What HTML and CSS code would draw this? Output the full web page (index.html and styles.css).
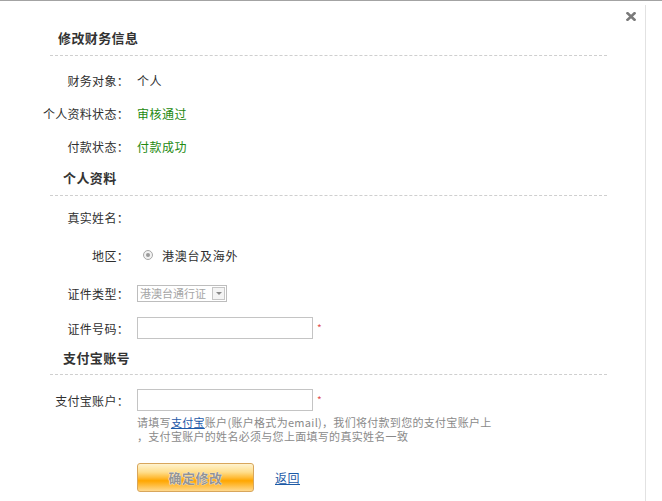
FILE: index.html
```html
<!DOCTYPE html>
<html lang="zh">
<head>
<meta charset="utf-8">
<title>修改财务信息</title>
<link rel="stylesheet" href="styles.css">
</head>
<body>
<div class="top-line"></div>
<div class="panel">
  <a class="close" href="#" aria-label="关闭">
    <svg width="10" height="9" viewBox="0 0 10 9"><path d="M1.5 1.2 L8.5 7.8 M8.5 1.2 L1.5 7.8" stroke="#7a7a7a" stroke-width="2.6" stroke-linecap="square"/></svg>
  </a>

  <div class="title">修改财务信息</div>
  <div class="dash dash-first"></div>

  <div class="row r33 first-row"><span class="label">财务对象：</span><span class="value">个人</span></div>
  <div class="row r33"><span class="label">个人资料状态：</span><span class="value green">审核通过</span></div>
  <div class="row r33"><span class="label">付款状态：</span><span class="value green">付款成功</span></div>

  <div class="heading h-personal">个人资料</div>
  <div class="dash dash-personal"></div>

  <div class="row r-name"><span class="label">真实姓名：</span><span class="value"></span></div>
  <div class="row r-region"><span class="label">地区：</span><span class="value"><span class="radio"><span class="radio-dot"></span></span><span class="radio-text">港澳台及海外</span></span></div>
  <div class="row r-type"><span class="label">证件类型：</span><span class="value"><span class="select"><span class="select-text">港澳台通行证</span><span class="select-btn"><span class="arrow"></span></span></span></span></div>
  <div class="row r-idnum"><span class="label">证件号码：</span><span class="value"><span class="input"></span><span class="star">*</span></span></div>

  <div class="heading h-alipay">支付宝账号</div>
  <div class="dash dash-alipay"></div>

  <div class="row r-account"><span class="label">支付宝账户：</span><span class="value"><span class="input"></span><span class="star">*</span></span></div>
  <div class="help">
    <div class="help-line">请填写<a href="#" class="help-link">支付宝</a>账户(账户格式为email)，我们将付款到您的支付宝账户上</div>
    <div class="help-line">，支付宝账户的姓名必须与您上面填写的真实姓名一致</div>
  </div>

  <div class="actions">
    <button class="submit" type="button">确定修改</button>
    <a class="back" href="#">返回</a>
  </div>
</div>
</body>
</html>
```
FILE: styles.css
```css
html, body {
  margin: 0;
  padding: 0;
  background: #fff;
}
body {
  font-family: "Noto Sans CJK SC", "Liberation Sans", sans-serif;
  font-size: 12px;
  color: #2f2f2f;
}
.top-line {
  height: 1px;
  background: #a3a3a3;
}
.panel {
  position: relative;
  width: 646px;
  min-height: 496px;
  margin-top: 4px;
  border-right: 1px solid #e2e2e2;
  box-sizing: border-box;
  padding-top: 23px;
}
.close {
  position: absolute;
  left: 626px;
  top: 7px;
  width: 10px;
  height: 9px;
  display: block;
}
.close svg { display: block; }

.title {
  margin-left: 58px;
  height: 20px;
  line-height: 20px;
  font-size: 13px;
  font-weight: bold;
  letter-spacing: 0.4px;
  color: #333;
}
.dash {
  margin-left: 50px;
  width: 557px;
  border-top: 1px dashed #cfcfcf;
}
.dash-first { margin-top: 7px; }

.row {
  display: flex;
  align-items: center;
}
.first-row { margin-top: 8px; }
.r33 { height: 33px; }
.label {
  width: 129px;
  text-align: right;
  letter-spacing: 0.3px;
  flex: none;
  white-space: nowrap;
}
.value {
  margin-left: 8px;
  display: flex;
  align-items: center;
  letter-spacing: 0.5px;
}
.green { color: #23890f; }

.heading {
  margin-left: 63px;
  font-size: 13px;
  font-weight: bold;
  letter-spacing: 0.4px;
  color: #333;
  display: flex;
  align-items: center;
}
.h-personal { height: 28px; }
.dash-personal { margin-top: 4px; }

.r-name { margin-top: 3px; height: 36px; }
.r-region { height: 40px; }
.r-type { height: 36px; }
.r-idnum { height: 34px; }

.radio {
  margin-left: 6px;
  width: 10px;
  height: 10px;
  box-sizing: border-box;
  border: 1px solid #a8a8a8;
  border-radius: 50%;
  background: #f2f2f2;
  display: flex;
  align-items: center;
  justify-content: center;
}
.radio-dot {
  width: 4px;
  height: 4px;
  border-radius: 50%;
  background: #9a9a9a;
}
.radio-text {
  margin-left: 9px;
  letter-spacing: 0.7px;
}

.select {
  width: 90px;
  height: 17px;
  box-sizing: border-box;
  border: 1px solid #bdbdbd;
  display: flex;
  align-items: center;
  font-size: 11px;
  color: #a6a6a6;
  letter-spacing: 0;
}
.select-text {
  padding-left: 2px;
  white-space: nowrap;
  flex: 1;
  line-height: 15px;
}
.select-btn {
  width: 13px;
  height: 13px;
  margin-right: 1px;
  box-sizing: border-box;
  border: 1px solid #c6c6c6;
  background: #f4f4f4;
  display: flex;
  align-items: center;
  justify-content: center;
  flex: none;
}
.arrow {
  width: 0;
  height: 0;
  border-left: 3px solid transparent;
  border-right: 3px solid transparent;
  border-top: 3px solid #8a8a8a;
}

.input {
  display: block;
  width: 176px;
  height: 22px;
  box-sizing: border-box;
  border: 1px solid #c4c4c4;
  background: #fff;
}
.star {
  margin-left: 4px;
  color: #e05050;
  font-size: 10px;
  line-height: 10px;
}

.h-alipay { height: 24px; }
.dash-alipay { margin-top: 5px; }

.r-account { margin-top: 14px; height: 22px; }

.help {
  margin-top: 4px;
  margin-left: 137px;
  font-size: 11px;
  color: #8a8a8a;
  letter-spacing: 0.3px;
  white-space: nowrap;
  display: flex;
  flex-direction: column;
}
.help-line {
  height: 14px;
  display: flex;
  align-items: center;
}
.help-link {
  color: #1f5aa8;
  text-decoration: underline;
}

.actions {
  margin-top: 20px;
  margin-left: 137px;
  display: flex;
  align-items: center;
}
.submit {
  width: 117px;
  height: 29px;
  box-sizing: border-box;
  border: 1px solid #d8a65c;
  border-radius: 3px;
  background: linear-gradient(to bottom, #fff3cf 0%, #ffde8c 30%, #ffbd3a 50%, #ffa600 62%, #ffbb3a 78%, #ffd98e 100%);
  font-family: "Noto Sans CJK SC", sans-serif;
  font-size: 13px;
  font-weight: bold;
  color: #939393;
  text-shadow: 0 0 1px #fff, 0 0 1px #fff;
  letter-spacing: 0.5px;
  padding: 0;
  cursor: pointer;
}
.back {
  margin-left: 21px;
  color: #1c5aa6;
  text-decoration: underline;
  font-size: 12px;
  letter-spacing: 0.5px;
}
```
